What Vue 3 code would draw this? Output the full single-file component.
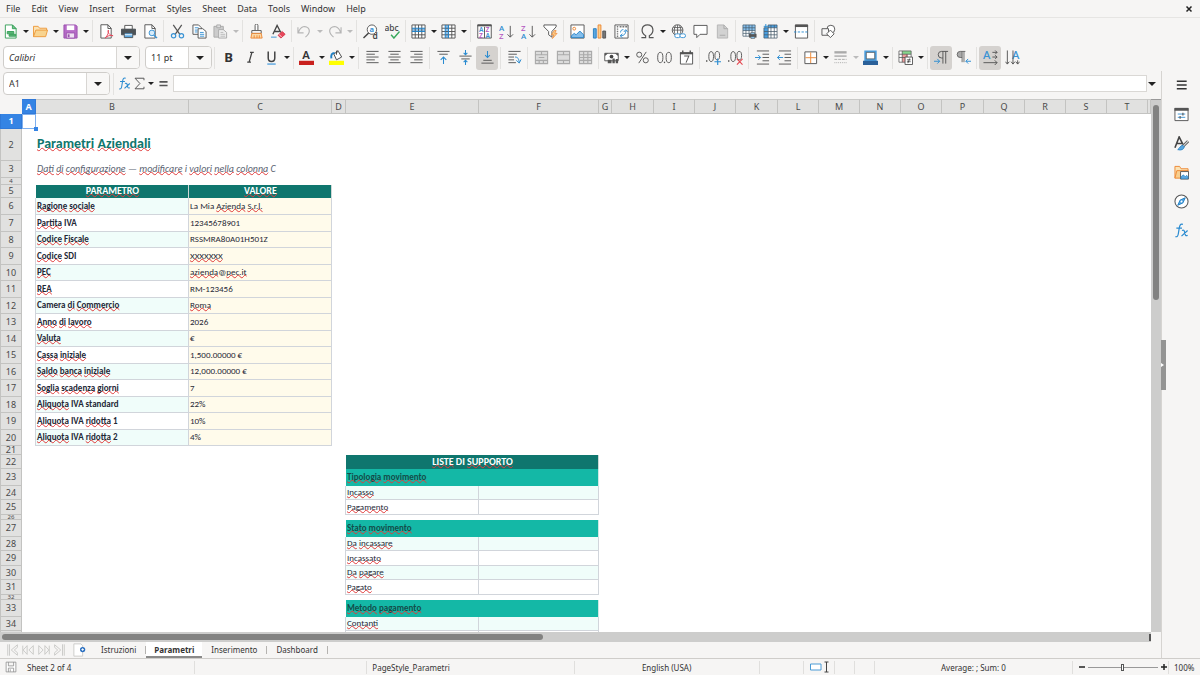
<script setup>
import { ref } from 'vue'

const menus = ['File', 'Edit', 'View', 'Insert', 'Format', 'Styles', 'Sheet', 'Data', 'Tools', 'Window', 'Help']

// Toolbar entries: '|' is a separator, a trailing '+' adds a drop-down arrow,
// '-' marks a disabled entry and '*' a pressed one.
const parse = (spec) =>
  spec.split(' ').map((s) => ({
    sep: s === '|',
    name: s.replace(/[+\-*]/g, ''),
    caret: s.includes('+'),
    off: s.includes('-'),
    on: s.includes('*'),
  }))

const standard = parse(
  'new+ open+ save+ | pdf print preview | cut copy paste+- | clone clear | undo+- redo+- | find spell | row+ col+ | sort az za filter | image chart pivot | omega+ link comment header- | area freeze+ split | shapes',
)
const formatting = parse(
  '| bold italic under+ | color+ fill+ | left center right | top middle bottom* | wrap | merge1- merge2- merge3- | money+ percent number date | adddec deldec | indent outdent | borders+ lines+- bcolor+ | cond+ | ltr* rtl | horiz* vert',
)
const side = ['menu', 'props', 'styles', 'gallery', 'navigator', 'fx']

const fontName = ref('Calibri')
const fontSize = ref('11 pt')
const cellRef = ref('A1')
const formula = ref('')
const zoom = ref(50)

const letters = 'ABCDEFGHIJKLMNOPQRST'.split('')
const widths = [14, 153, 143, 14, 133, 120, 13, 42, 41, 41, 42, 41, 41, 41, 41, 42, 41, 41, 41, 41]

const heights = [
  15, 32, 17, 7, 13, 17, 17, 16, 17, 16, 17, 16, 17, 16, 17, 16, 17, 16, 17, 16, 9, 14, 17, 14, 15, 5, 17, 14, 15, 14,
  15, 5, 17, 14, 14,
]

// Words between underscores are the ones the spelling checker flags.
const params = {
  6: ['_Ragione_ _sociale_', 'La Mia _Azienda_ _S.r.l._'],
  7: ['_Partita_ IVA', '12345678901'],
  8: ['_Codice_ _Fiscale_', 'RSSMRA80A01H501Z'],
  9: ['_Codice_ SDI', '_XXXXXXX_'],
  10: ['_PEC_', '_azienda_@_pec.it_'],
  11: ['_REA_', 'RM-123456'],
  12: ['Camera _di_ _Commercio_', '_Roma_'],
  13: ['_Anno_ _di_ _lavoro_', '2026'],
  14: ['_Valuta_', '€'],
  15: ['_Cassa_ _iniziale_', '1,500.00000 €'],
  16: ['_Saldo_ _banca_ _iniziale_', '12,000.00000 €'],
  17: ['_Soglia_ _scadenza_ _giorni_', '7'],
  18: ['_Aliquota_ IVA standard', '22%'],
  19: ['_Aliquota_ IVA _ridotta_ 1', '10%'],
  20: ['_Aliquota_ IVA _ridotta_ 2', '4%'],
}
const sections = { 23: '_Tipologia_ _movimento_', 27: '_Stato_ _movimento_', 33: '_Metodo_ _pagamento_' }
const items = {
  24: '_Incasso_',
  25: '_Pagamento_',
  28: '_Da_ _incassare_',
  29: '_Incassato_',
  30: '_Da_ _pagare_',
  31: '_Pagato_',
  34: '_Contanti_',
  35: '',
}

const cell = (cls = '', text = '', span = 1) => ({
  cls,
  span,
  parts: text.split('_').map((t, i) => ({ t, bad: i % 2 === 1 })),
})

const rows = heights.map((h, i) => {
  const n = i + 1
  const tint = n % 2 === 0 ? ' tint' : ''
  let left = [cell(), cell(), cell()]
  let right = [cell(), cell(), cell()]
  if (n === 1) left[0] = cell('cursor')
  if (n === 2) left[1] = cell('title', '_Parametri_ _Aziendali_')
  if (n === 3)
    left[1] = cell('subtitle', '_Dati_ _di_ _configurazione_ — _modificare_ i _valori_ _nella_ _colonna_ C')
  if (n === 5) left = [cell(), cell('head', '_PARAMETRO_'), cell('head', '_VALORE_')]
  if (params[n]) left = [cell('edge'), cell('label box' + tint, params[n][0]), cell('value box', params[n][1])]
  if (n === 22) right = [cell(), cell('head', '_LISTE_ DI _SUPPORTO_', 2)]
  if (sections[n]) right = [cell(), cell('section', sections[n], 2)]
  if (n in items) right = [cell('edge'), cell('item box' + tint, items[n]), cell('box' + tint)]
  return { n, h, small: h < 8, cells: [...left, ...right, cell('', '', 15)] }
})

const sheets = ['Istruzioni', 'Parametri', 'Inserimento', 'Dashboard']
const active = ref('Parametri')
</script>

<template>
  <svg class="defs" aria-hidden="true">
    <symbol id="i-new" viewBox="0 0 16 16"><path d="M2.500 1h7.500l4 4v10h-11.500z" fill="#fff" stroke="#37a05a" /><path d="M10 1v4h4z" fill="#7bc98f" stroke="#37a05a" /><path d="M4.500 8h7v2.500h-7zM6.500 11h7v2h-7z" fill="#58b574" stroke="#37a05a" /></symbol>
    <symbol id="i-open" viewBox="0 0 16 16"><path d="M.5 13.500V2.500h5l1.500 2h7.500v3" fill="#fbe3b5" stroke="#ed9a3c" /><path d="M.5 13.500l2.500-7h12.500l-2 7z" fill="#f8d490" stroke="#ed9a3c" /></symbol>
    <symbol id="i-save" viewBox="0 0 16 16"><path d="M1 1h12.500l1.500 1.500V15H1z" fill="#b76cc8" stroke="#9a4fae" /><path d="M4 1.500h8v5H4z" fill="#fff" /><path d="M3.500 9.500h9V15h-9z" fill="#efe0f3" stroke="#9a4fae" /><path d="M5 11h2v3H5z" fill="#9a4fae" /></symbol>
    <symbol id="i-pdf" viewBox="0 0 16 16"><path d="M2 .8h7.500L13 4.500V15H2z" fill="#fff" stroke="#555" /><path d="M9.500.8v4H13" fill="none" stroke="#555" /><path d="M6.500 15c3-3 4-6 3.500-8.500-1.500 2 1.500 6 5 6-3-.8-6 0-8.500 2.500z" fill="#fff" stroke="#e4465a" /></symbol>
    <symbol id="i-print" viewBox="0 0 16 16"><path d="M4 1.500h8V6H4z" fill="#fff" stroke="#555" /><path d="M.5 5.500h15v6H.5z" fill="#4c5256" stroke="#4c5256" /><path d="M3.500 9.500h9v5h-9z" fill="#5ba7e0" stroke="#4c5256" /><path d="M4 11.500h8" stroke="#fff" /></symbol>
    <symbol id="i-preview" viewBox="0 0 16 16"><path d="M2 .8h7.500L13 4.500V15H2z" fill="#fff" stroke="#555" /><path d="M9.500.8v4H13" fill="none" stroke="#555" /><circle cx="9.500" cy="9.500" r="3" fill="#d8ecfa" stroke="#3a93d4" /><path d="M11.500 12l3.500 3" stroke="#3a93d4" stroke-width="1.500" /></symbol>
    <symbol id="i-cut" viewBox="0 0 16 16"><path d="M3.500 1l7 10M12.500 1l-7 10" stroke="#555" stroke-width="1.300" /><circle cx="3.800" cy="12.500" r="2.300" fill="none" stroke="#3a93d4" stroke-width="1.300" /><circle cx="12.200" cy="12.500" r="2.300" fill="none" stroke="#3a93d4" stroke-width="1.300" /></symbol>
    <symbol id="i-copy" viewBox="0 0 16 16"><path d="M1 1h6l3 3v7H1z" fill="#fff" stroke="#555" /><path d="M3 4h4M3 6.500h3M3 8.500h3" stroke="#3a93d4" /><path d="M6.500 5h5L15 8v7H6.500z" fill="#fff" stroke="#555" /><path d="M8.500 9h4M8.500 11h4.500M8.500 13h4.500" stroke="#3a93d4" /></symbol>
    <symbol id="i-paste" viewBox="0 0 16 16"><path d="M1 2.500h10V14H1z" fill="#ccc" stroke="#aaa" /><path d="M4 1h4v3H4z" fill="#ddd" stroke="#aaa" /><path d="M6 6h5l3.500 3v6H6z" fill="#eee" stroke="#aaa" /><path d="M8 9h3M8 11h5M8 13h5" stroke="#bbb" /></symbol>
    <symbol id="i-clone" viewBox="0 0 16 16"><path d="M6.500 7V1.500a1.500 1.500 0 0 1 3 0V7" fill="#fff" stroke="#555" /><path d="M3 7h10v3H3z" fill="#fff" stroke="#555" /><path d="M3 10h10l1 5H2z" fill="#fbd9a8" stroke="#ed8733" /><path d="M5.500 12v3M8.500 12v3M11 12v3" stroke="#ed8733" /></symbol>
    <symbol id="i-clear" viewBox="0 0 16 16"><path d="M2 11L6.500 1.500 10.500 9M3.800 8h5.500" fill="none" stroke="#444" stroke-width="1.400" /><path d="M0 14h6" stroke="#3a93d4" /><path d="M7.500 12l4.500-4 3 3-4.500 4z" fill="#e8475b" stroke="#d33447" /><path d="M8.500 11l3 3" stroke="#fff" stroke-width=".8" /></symbol>
    <symbol id="i-undo" viewBox="0 0 16 16"><path d="M1 3.500v6h6M1.500 9C4 2 9 1.500 12 4.500c2.500 3 1 6-3 9.500" fill="none" stroke="#b5b5b5" stroke-width="1.200" /></symbol>
    <symbol id="i-redo" viewBox="0 0 16 16"><path d="M15 3.500v6H9M14.500 9C12 2 7 1.500 4 4.500c-2.500 3-1 6 3 9.500" fill="none" stroke="#b5b5b5" stroke-width="1.200" /></symbol>
    <symbol id="i-find" viewBox="0 0 16 16"><circle cx="9.500" cy="6" r="5" fill="#fff" stroke="#555" /><path d="M6 9.500L.5 15" stroke="#444" stroke-width="1.600" /><text x="7" y="8.500" font-size="8" font-weight="700" fill="#3a93d4">a</text><text x="10" y="15.500" font-size="9" font-weight="600" fill="#444">d</text></symbol>
    <symbol id="i-spell" viewBox="0 0 16 16"><text x="-.5" y="7.500" font-size="9" font-weight="500" fill="#444">abc</text><path d="M6.500 11.500l3 3.500 6-7" fill="none" stroke="#37a95c" stroke-width="1.500" /></symbol>
    <symbol id="i-row" viewBox="0 0 16 16"><path d="M1 1h14v14H1z" fill="#fff" /><path d="M1 4.500h14v3.500H1z" fill="#83beec" /><path d="M1 1h14v14H1zM4.500 1v14M8 1v14M11.500 1v14M1 11.500h14" fill="none" stroke="#555" /><path d="M1 4.500h14M1 8h14" stroke="#1e7fc4" /></symbol>
    <symbol id="i-col" viewBox="0 0 16 16"><path d="M1 1h14v14H1z" fill="#fff" /><path d="M4.500 1H8v14H4.500z" fill="#83beec" /><path d="M1 1h14v14H1zM11.500 1v14M1 4.500h14M1 8h14M1 11.500h14" fill="none" stroke="#555" /><path d="M4.500 1v14M8 1v14" stroke="#1e7fc4" /></symbol>
    <symbol id="i-sort" viewBox="0 0 16 16"><path d="M.8 1h14.400v14H.8zM8 3v12" fill="#fff" stroke="#555" /><path d="M.5 1.500h15" stroke="#555" stroke-width="2" /><text x="2" y="9" font-size="7" font-weight="600" fill="#3a93d4">A</text><text x="2" y="15" font-size="7" font-weight="600" fill="#b455c0">Z</text><text x="9" y="9" font-size="7" font-weight="600" fill="#b455c0">Z</text><text x="9" y="15" font-size="7" font-weight="600" fill="#3a93d4">A</text></symbol>
    <symbol id="i-az" viewBox="0 0 16 16"><text x="0" y="7" font-size="8.500" font-weight="500" fill="#2a8bd0">A</text><text x="0" y="15.500" font-size="8.500" font-weight="500" fill="#b455c0">Z</text><path d="M12 2v12M9 11l3 3 3-3" fill="none" stroke="#555" /></symbol>
    <symbol id="i-za" viewBox="0 0 16 16"><text x="0" y="7" font-size="8.500" font-weight="500" fill="#b455c0">Z</text><text x="0" y="15.500" font-size="8.500" font-weight="500" fill="#2a8bd0">A</text><path d="M12 2v12M9 11l3 3 3-3" fill="none" stroke="#555" /></symbol>
    <symbol id="i-filter" viewBox="0 0 16 16"><path d="M1 1h13v2L9.500 8v6L6 11.500V8L1 3z" fill="#fff" stroke="#555" /><path d="M12 7l-3 4.500h2.500L10 15.500l5-5.500h-2.500L14 7z" fill="#fbd08d" stroke="#ed8733" stroke-width=".8" /></symbol>
    <symbol id="i-image" viewBox="0 0 16 16"><path d="M1 1h14v14H1z" fill="#fff" stroke="#555" /><circle cx="4.500" cy="5" r="1.500" fill="#fff" stroke="#ed8733" /><path d="M1.500 14.500v-2l3-2.500 2 1.500 4-4 4 4v3z" fill="#83beec" stroke="#2a84c8" /></symbol>
    <symbol id="i-chart" viewBox="0 0 16 16"><path d="M1.500 5h3v10h-3z" fill="#5ba7e0" stroke="#2a7fc0" /><path d="M6.500 1h3v14h-3z" fill="#fbd08d" stroke="#ed8733" /><path d="M11.500 7.500h3V15h-3z" fill="#777" stroke="#555" /></symbol>
    <symbol id="i-pivot" viewBox="0 0 16 16"><path d="M1 1h14v14H1z" fill="#fff" stroke="#555" /><path d="M3 3h1.500M3 5.500h1.500M3 8h1.500M3 10.500h1.500M3 13h1.500M6 3h2M9 3h2M12 3h2" stroke="#777" stroke-width="1.500" /><path d="M7 12.500c4 0 5.500-2 5.500-5.500M10.500 8.500l2-2.500 2 2.500M9 10.500l-2.500 2L9 14.500M7 9c0-2 1-3 3-3" fill="none" stroke="#2a8bd0" /></symbol>
    <symbol id="i-omega" viewBox="0 0 16 16"><path d="M1.500 14.500H6v-2C0 9 1.500 1 8 1s8 8 2 11.500v2h4.500" fill="none" stroke="#555" stroke-width="1.300" /></symbol>
    <symbol id="i-link" viewBox="0 0 16 16"><circle cx="7" cy="6.500" r="5.700" fill="#fff" stroke="#555" /><path d="M1.500 6.500h11M7 1v11M2.500 3.800h9M4.500 11C3 8 3 5 5 1.500M9.500 11c1.500-3 1.500-6-.5-9.500" fill="none" stroke="#555" stroke-width=".9" /><rect x="4" y="10.500" width="6" height="4" rx="2" fill="#fff" stroke="#3a93d4" /><rect x="9.500" y="10.500" width="6" height="4" rx="2" fill="#fff" stroke="#3a93d4" /></symbol>
    <symbol id="i-comment" viewBox="0 0 16 16"><path d="M1 1.500h14v9.500H7.500L4 14.500V11H1z" fill="#fff" stroke="#555" /></symbol>
    <symbol id="i-header" viewBox="0 0 16 16"><path d="M2.500 1h7l4 4v10h-11z" fill="#d2d2d2" stroke="#b5b5b5" /><path d="M9.500 1v4h4M5 12h6" fill="none" stroke="#aaa" /></symbol>
    <symbol id="i-area" viewBox="0 0 16 16"><path d="M1 1h13v12H1z" fill="#fff" /><path d="M1 1h13v6H1z" fill="#83beec" /><path d="M1 1h13v12H1zM4.200 1v12M7.500 1v12M10.700 1v12M1 4h13M1 7h13M1 10h13" fill="none" stroke="#4a6072" stroke-width=".8" /><path d="M7.500 10.500h8v4h-8z" fill="#555" /><path d="M9.500 9h4v2h-4zM9.500 13.500h4v2h-4z" fill="#8ecbf5" stroke="#555" stroke-width=".6" /></symbol>
    <symbol id="i-freeze" viewBox="0 0 16 16"><path d="M1 4h14v11H1z" fill="#fff" /><path d="M1 4h4.500v11H1zM5.500 1h9.500v3H5.500z" fill="#4a9fe0" /><path d="M1 4h14v11H1zM5.500 1v14M5.500 1H15v3M8.500 1v14M12 1v14M1 8h14M1 11.500h14" fill="none" stroke="#45596a" stroke-width=".8" /><path d="M3 0v5M.8 2.500h4.500" stroke="#2a8bd0" /></symbol>
    <symbol id="i-split" viewBox="0 0 16 16"><path d="M1.500 1h13v14h-13z" fill="#fff" stroke="#555" /><path d="M1 2h14" stroke="#555" stroke-width="2.500" /><path d="M0 8.500h16" stroke="#2a8bd0" stroke-dasharray="2.500 1.500" /></symbol>
    <symbol id="i-shapes" viewBox="0 0 16 16"><circle cx="10.500" cy="5.500" r="4.200" fill="#fff" stroke="#555" /><path d="M1 5h7v7H1z" fill="#f7f7f7" stroke="#555" /><path d="M10 6.500l4 4-4 4-4-4z" fill="#fff" stroke="#555" /></symbol>

    <symbol id="i-bold" viewBox="0 0 16 16"><text x="3.500" y="13" font-size="14" font-weight="700" fill="#333">B</text></symbol>
    <symbol id="i-italic" viewBox="0 0 16 16"><path d="M7.500 2.500h4M4.500 13h4M9.500 2.500L6.500 13" stroke="#444" stroke-width="1.400" /></symbol>
    <symbol id="i-under" viewBox="0 0 16 16"><path d="M4.500 1.500v7c0 5 7 5 7 0v-7" fill="none" stroke="#444" stroke-width="1.600" /><path d="M3.500 15h9" stroke="#5aa5e0" stroke-width="1.500" /></symbol>
    <symbol id="i-color" viewBox="0 0 16 16"><text x="3.500" y="10" font-size="12" font-weight="600" fill="#333">A</text><path d="M0 11.500h16V16H0z" fill="#c9211e" /></symbol>
    <symbol id="i-fill" viewBox="0 0 16 16"><path d="M5 4l5-2.500 3.500 6L8 10.500z" fill="#fff" stroke="#444" /><path d="M8 5V1h2" fill="none" stroke="#444" /><path d="M6 3C3 3 2 5 2.500 9" fill="none" stroke="#1e7fc4" stroke-width="2" /><path d="M0 11.500h16V16H0z" fill="#ff0" /></symbol>
    <symbol id="i-left" viewBox="0 0 16 16"><path d="M1.500 1.500h13M1.500 4.500h9M1.500 7.500h13M1.500 10.500h9M1.500 13.500h13" stroke="#555" /></symbol>
    <symbol id="i-center" viewBox="0 0 16 16"><path d="M1.500 1.500h13M3.500 4.500h9M1.500 7.500h13M3.500 10.500h9M1.500 13.500h13" stroke="#555" /></symbol>
    <symbol id="i-right" viewBox="0 0 16 16"><path d="M1.500 1.500h13M5.500 4.500h9M1.500 7.500h13M5.500 10.500h9M1.500 13.500h13" stroke="#555" /></symbol>
    <symbol id="i-top" viewBox="0 0 16 16"><path d="M1.500 1.500h13M3.500 4.500h9" stroke="#555" /><path d="M8 15V7.500M5 10.500l3-3 3 3" fill="none" stroke="#2a8bd0" stroke-width="1.100" /></symbol>
    <symbol id="i-middle" viewBox="0 0 16 16"><path d="M1.500 6.500h13M3.500 9.500h9" stroke="#555" /><path d="M8 0v5M6 3l2 2 2-2M8 16v-5M6 13l2-2 2 2" fill="none" stroke="#2a8bd0" stroke-width="1.100" /></symbol>
    <symbol id="i-bottom" viewBox="0 0 16 16"><path d="M3.500 11h9M1.500 14h13" stroke="#555" /><path d="M8 1v7M5.500 5.500L8 8l2.500-2.500" fill="none" stroke="#2a8bd0" stroke-width="1.100" /></symbol>
    <symbol id="i-wrap" viewBox="0 0 16 16"><path d="M1.500 1.500h13M1.500 4.500h9M1.500 7.500h6M1.500 10.500h6M1.500 13.500h8" stroke="#555" /><path d="M8.500 7.500c3 0 4 1.500 4.500 5.500M10 11l3 3 2-4" fill="none" stroke="#2a8bd0" /></symbol>
    <symbol id="i-merge1" viewBox="0 0 16 16"><path d="M1.500 1.500h13v13h-13zM8 1.500v3.500M1.500 5h13M1.500 11h13M5.500 11v3.500M10 11v3.500M5 8h6" fill="#dcdcdc" stroke="#aaa" stroke-width="1.200" /></symbol>
    <symbol id="i-merge2" viewBox="0 0 16 16"><path d="M1.500 1.500h13v13h-13zM8 1.500v3.500M1.500 5h13M1.500 11h13M8 11v3.500" fill="#dcdcdc" stroke="#aaa" stroke-width="1.200" /></symbol>
    <symbol id="i-merge3" viewBox="0 0 16 16"><path d="M1.500 1.500h13v13h-13zM6 1.500v13M10.500 1.500v13M1.500 5h13M1.500 8h13M1.500 11h13" fill="#dcdcdc" stroke="#aaa" stroke-width="1.200" /></symbol>
    <symbol id="i-money" viewBox="0 0 16 16"><path d="M.8 3.500h14.400v8H.8z" fill="#fff" stroke="#555" /><path d="M1 3.500h3.500L1 6.500zM15 3.500h-3.500L15 6.500z" fill="#555" /><circle cx="8" cy="7" r="2" fill="#444" /><path d="M4 10.500h4V14H4zM9 9h2.500v5H9zM12.500 9.500H15V14h-2.500z" fill="#555" /></symbol>
    <symbol id="i-percent" viewBox="0 0 16 16"><circle cx="4.500" cy="5" r="2.700" fill="none" stroke="#555" /><circle cx="11.500" cy="11" r="2.700" fill="none" stroke="#555" /><path d="M12 2L4 14" stroke="#555" /></symbol>
    <symbol id="i-number" viewBox="0 0 16 16"><ellipse cx="3.500" cy="8" rx="2.800" ry="5.500" fill="none" stroke="#555" /><ellipse cx="12.500" cy="8" rx="2.800" ry="5.500" fill="none" stroke="#555" /><path d="M7.300 12.500h1.400v1.500H7.300z" fill="#555" /></symbol>
    <symbol id="i-date" viewBox="0 0 16 16"><path d="M1.500 3h13v12h-13z" fill="#fff" stroke="#555" /><path d="M1 3.500h14" stroke="#555" stroke-width="2.200" /><path d="M4 .5V4M12 .5V4" stroke="#555" stroke-width="1.500" /><path d="M5.500 6.500h5l-3 7" fill="none" stroke="#555" stroke-width="1.100" /></symbol>
    <symbol id="i-adddec" viewBox="0 0 16 16"><path d="M0 11h1.500v1.500H0z" fill="#555" /><ellipse cx="5.500" cy="7" rx="2.500" ry="5.300" fill="none" stroke="#555" /><ellipse cx="12" cy="6" rx="2.500" ry="4.500" fill="none" stroke="#555" /><path d="M12.500 9v7M9 12.500h7" stroke="#2a8bd0" stroke-width="1.200" /></symbol>
    <symbol id="i-deldec" viewBox="0 0 16 16"><path d="M0 11h1.500v1.500H0z" fill="#555" /><ellipse cx="5.500" cy="7" rx="2.500" ry="5.300" fill="none" stroke="#555" /><ellipse cx="12" cy="6" rx="2.500" ry="4.500" fill="none" stroke="#555" /><path d="M9.500 9.500l6 6M15.500 9.500l-6 6" stroke="#e4464f" stroke-width="1.200" /></symbol>
    <symbol id="i-indent" viewBox="0 0 16 16"><path d="M2 1h13M8 4.500h7M8 8h7M8 11.500h7M2 15h13" stroke="#555" /><path d="M0 8h6M3.500 5.500L6 8l-2.500 2.500" fill="none" stroke="#2a8bd0" /></symbol>
    <symbol id="i-outdent" viewBox="0 0 16 16"><path d="M2 1h13M8 4.500h7M8 8h7M8 11.500h7M2 15h13" stroke="#555" /><path d="M6.500 8H.5M3 5.500L.5 8 3 10.500" fill="none" stroke="#2a8bd0" /></symbol>
    <symbol id="i-borders" viewBox="0 0 16 16"><path d="M2 2h12.500v12.500H2z" fill="#fff" stroke="#555" /><path d="M8.200 2.500V14M2.500 8.200H14" stroke="#ed8733" /></symbol>
    <symbol id="i-lines" viewBox="0 0 16 16"><path d="M1.500 2.500h13" stroke="#aaa" stroke-width="2.500" /><path d="M1.500 6.500h13" stroke="#aaa" stroke-width="1.500" /><path d="M1.500 10h13" stroke="#aaa" stroke-dasharray="3 1" /><path d="M1.500 13.500h13" stroke="#aaa" stroke-dasharray="1 1" /></symbol>
    <symbol id="i-bcolor" viewBox="0 0 16 16"><path d="M2.500 1.500h11v9h-11z" fill="#fff" stroke="#4a9fe0" stroke-width="2.200" /><path d="M3.500 2.500h9v7h-9z" fill="none" stroke="#555" stroke-width=".8" /><path d="M0 11.500h16V16H0z" fill="#2a6099" /></symbol>
    <symbol id="i-cond" viewBox="0 0 16 16"><path d="M1 1h13v12H1z" fill="#fff" /><path d="M4.500 1H14v3.500H4.500z" fill="#86d68c" /><path d="M4.500 4.500h6V13h-6z" fill="#ef9a9a" /><path d="M1 1h13v12H1zM4.500 1v12M1 4.500h13M1 8h13M9.500 4.500V8" fill="none" stroke="#555" stroke-width=".8" /><path d="M7.500 7.500h8v8h-8z" fill="#fff" stroke="#555" /><path d="M9.500 10.500h4M9.500 12.500h4M12.500 9l-2 5" stroke="#333" stroke-width=".8" /></symbol>
    <symbol id="i-ltr" viewBox="0 0 16 16"><path d="M9.500 14.500v-13M12.500 14.500v-13M15 1.500H8a3.500 3.500 0 0 0 0 7h1.500" fill="none" stroke="#555" /><path d="M0 12h6M3.500 9.500L6 12l-2.500 2.500" fill="none" stroke="#2a8bd0" /></symbol>
    <symbol id="i-rtl" viewBox="0 0 16 16"><path d="M6.500 1.500h-2a3.200 3.200 0 0 0 0 6.500h2z" fill="#aaa" /><path d="M6.500 13V1.500M8.500 13V1.500M10 1.500H4.500a3.200 3.200 0 0 0 0 6.500h2" fill="none" stroke="#666" /><path d="M16 12h-5.500M13 9.500L10.500 12l2.500 2.500" fill="none" stroke="#2a8bd0" /></symbol>
    <symbol id="i-horiz" viewBox="0 0 16 16"><text x="0" y="10" font-size="12" font-weight="500" fill="#3a93d4">A</text><path d="M10 2.500h5M13 .5l2 2-2 2M10 7.500h5M13 5.500l2 2-2 2M.5 13.500H15M12.500 11l2.500 2.500-2.500 2.500" fill="none" stroke="#555" /></symbol>
    <symbol id="i-vert" viewBox="0 0 16 16"><text x="7.500" y="10" font-size="12" font-weight="500" fill="#3a93d4">A</text><path d="M2.500.5V15M.5 12.500l2 2.500 2-2.500M8.500.5V15M6.500 12.500l2 2.500 2-2.500M13.500 11v4M11.500 12.500l2 2.500 2-2.500" fill="none" stroke="#555" /></symbol>

    <symbol id="i-menu" viewBox="0 0 16 16"><path d="M3 3.500h10.500M3 7.500h10.500M3 11.500h10.500" stroke="#333" stroke-width="1.600" /></symbol>
    <symbol id="i-props" viewBox="0 0 16 16"><path d="M1 1.500h14v13H1z" fill="#fff" stroke="#555" /><path d="M.5 2.500h15" stroke="#555" stroke-width="3" /><path d="M4 7.500h8M4 11h8" stroke="#3a93d4" /><path d="M9.500 6v3M6.500 9.500v3" stroke="#555" stroke-width="1.200" /></symbol>
    <symbol id="i-styles" viewBox="0 0 16 16"><path d="M1 12.500L5.500 1 9.500 9M2.500 8h6" fill="none" stroke="#444" stroke-width="1.700" /><path d="M15 5.500l-6 6" stroke="#555" stroke-width="3" /><path d="M15 5.500l-5.500 5.500" stroke="#ddd" stroke-width="1.200" /><path d="M9.500 10c-3 0-3 3-5.500 4.500 3.500 1 6.500 0 7-3z" fill="#5ba7e0" stroke="#2a84c8" /></symbol>
    <symbol id="i-gallery" viewBox="0 0 16 16"><path d="M1 14V1.500h5l1.500 2.500H15v3" fill="#fbe3b5" stroke="#ed8733" /><path d="M1 14l2-8h12v3H7v5z" fill="#f8cf90" stroke="#ed8733" /><path d="M7 7h8.500v8H7z" fill="#fff" stroke="#555" /><path d="M7.500 14.500v-2l2.500-2 2 2 1.500-1.500 1.500 1.500v2z" fill="#5ba7e0" stroke="#1e7fc4" stroke-width=".7" /></symbol>
    <symbol id="i-navigator" viewBox="0 0 16 16"><circle cx="8" cy="8" r="7" fill="#fff" stroke="#555" stroke-width="1.100" /><path d="M12 4l-2.500 5.500L4 12l2.500-5.500z" fill="#5ba7e0" stroke="#1e7fc4" /><circle cx="8" cy="8" r="1" fill="#fff" /></symbol>
    <symbol id="i-fx" viewBox="0 0 16 16"><path d="M9.500 1.500C6.500.5 6 3 5.500 6L4.500 12c-.5 2.500-1.500 3-3 2.500M2.500 5.500h6M8.500 8c2-1 2.500 0 3 2.500s1 4 3 2.500M14.500 8l-6.500 6" fill="none" stroke="#2a8bd0" stroke-width="1.300" /></symbol>
    <symbol id="i-sum" viewBox="0 0 16 16"><path d="M13.500 4V1.500h-11l6 6.500-6 6.500h11V12" fill="none" stroke="#555" stroke-width="1.200" /></symbol>
    <symbol id="i-equal" viewBox="0 0 16 16"><path d="M3 6h10M3 10.500h10" stroke="#555" stroke-width="2" /></symbol>
    <symbol id="i-disk" viewBox="0 0 16 16"><path d="M1.500 1.500h13v13h-13zM4.500 1.500v5h7v-5M4.500 14.500v-5h7v5M7 11v3" fill="#fff" stroke="#888" /></symbol>
    <symbol id="i-first" viewBox="0 0 16 16"><path d="M2 1.500v13M4 1.500v13M13 2L6 8l7 6v-3L9.500 8 13 5z" fill="none" stroke="#c6c6c4" /></symbol>
    <symbol id="i-prev" viewBox="0 0 16 16"><path d="M2 3v10M7 3L2.500 8 7 13zM14 3L9 8l5 5z" fill="none" stroke="#c6c6c4" /></symbol>
    <symbol id="i-next" viewBox="0 0 16 16"><path d="M14 3v10M9 3l4.500 5L9 13zM2 3l5 5-5 5z" fill="none" stroke="#c6c6c4" /></symbol>
    <symbol id="i-last" viewBox="0 0 16 16"><path d="M14 1.500v13M12 1.500v13M3 2l7 6-7 6v-3L6.500 8 3 5z" fill="none" stroke="#c6c6c4" /></symbol>
    <symbol id="i-add" viewBox="0 0 16 16"><path d="M1 1h8l2 2v12H1z" fill="#fff" stroke="#c8c8c6" /><circle cx="11" cy="7.500" r="3" fill="#2a6fc0" /><path d="M11 6v3M9.500 7.500h3" stroke="#fff" /></symbol>
  </svg>

  <div class="app">
    <nav class="menubar">
      <button v-for="m in menus" :key="m">{{ m }}</button>
      <button class="close" aria-label="Close document">
        <svg viewBox="0 0 8 8"><path d="M1.500 1.500l5 5M6.500 1.500l-5 5" stroke="#222" stroke-width="1.500" /></svg>
      </button>
    </nav>

    <div class="toolbar">
      <template v-for="(t, i) in standard" :key="i">
        <i v-if="t.sep" class="sep"></i>
        <template v-else>
          <button class="tool" :class="{ shifted: t.caret }" :disabled="t.off" :aria-label="t.name">
            <svg><use :href="'#i-' + t.name" /></svg>
          </button>
          <button v-if="t.caret" class="caret" :disabled="t.off" :aria-label="t.name + ' options'"></button>
        </template>
      </template>
    </div>

    <div class="toolbar format">
      <div class="combo font">
        <input v-model="fontName" class="slanted" aria-label="Font name" />
        <button class="drop" aria-label="Font list"></button>
      </div>
      <div class="combo size">
        <input v-model="fontSize" aria-label="Font size" />
        <button class="drop" aria-label="Size list"></button>
      </div>
      <template v-for="(t, i) in formatting" :key="i">
        <i v-if="t.sep" class="sep"></i>
        <template v-else>
          <button class="tool" :class="{ on: t.on, shifted: t.caret }" :disabled="t.off" :aria-label="t.name">
            <svg><use :href="'#i-' + t.name" /></svg>
          </button>
          <button v-if="t.caret" class="caret" :disabled="t.off" :aria-label="t.name + ' options'"></button>
        </template>
      </template>
    </div>

    <div class="body">
      <main class="work">
        <div class="formula">
          <div class="combo name">
            <input v-model="cellRef" aria-label="Name box" />
            <button class="drop" aria-label="Named ranges"></button>
          </div>
          <i class="sep"></i>
          <button class="mini" aria-label="Function wizard"><svg><use href="#i-fx" /></svg></button>
          <button class="mini" aria-label="Sum"><svg><use href="#i-sum" /></svg></button>
          <button class="caret" aria-label="Select function"></button>
          <button class="mini equal" aria-label="Formula"><svg><use href="#i-equal" /></svg></button>
          <input v-model="formula" class="line" aria-label="Input line" />
          <button class="caret big" aria-label="Expand formula bar"></button>
        </div>

        <div class="sheet">
          <div class="view">
            <table>
              <colgroup>
                <col class="rowcol" />
                <col v-for="(w, i) in widths" :key="i" :style="{ width: w + 'px' }" />
                <col />
              </colgroup>
              <thead>
                <tr>
                  <th class="corner"></th>
                  <th v-for="l in letters" :key="l" :class="{ sel: l === 'A' }">{{ l }}</th>
                  <th></th>
                </tr>
              </thead>
              <tbody>
                <tr v-for="r in rows" :key="r.n" :style="{ height: r.h + 'px' }">
                  <th :class="{ sel: r.n === 1, small: r.small }">{{ r.n }}</th>
                  <td v-for="(c, i) in r.cells" :key="i" :colspan="c.span" :class="c.cls"><template v-for="(p, k) in c.parts" :key="k"><span v-if="p.bad" class="bad">{{ p.t }}</span><template v-else>{{ p.t }}</template></template></td>
                </tr>
              </tbody>
            </table>
          </div>
          <div class="vbar"><div class="vthumb"></div></div>
          <div class="hbar"><div class="hthumb"></div><div class="grip"></div></div>
        </div>

        <div class="tabs">
          <div class="pager">
            <button aria-label="First sheet"><svg><use href="#i-first" /></svg></button>
            <button aria-label="Previous sheet"><svg><use href="#i-prev" /></svg></button>
            <button aria-label="Next sheet"><svg><use href="#i-next" /></svg></button>
            <button aria-label="Last sheet"><svg><use href="#i-last" /></svg></button>
          </div>
          <button class="add" aria-label="Add sheet"><svg><use href="#i-add" /></svg></button>
          <button v-for="s in sheets" :key="s" class="tab" :class="{ current: s === active }" @click="active = s">{{ s }}</button>
        </div>
      </main>

      <aside class="side">
        <button v-for="s in side" :key="s" :aria-label="s"><svg><use :href="'#i-' + s" /></svg></button>
        <div class="handle"></div>
      </aside>
    </div>

    <footer class="status">
      <span class="disk"><svg><use href="#i-disk" /></svg></span>
      <span>Sheet 2 of 4</span>
      <span class="rule"></span>
      <span class="rule">PageStyle_Parametri</span>
      <span class="rule mid">English (USA)</span>
      <span class="rule"></span>
      <span class="rule mode">
        <svg viewBox="0 0 20 12"><path d="M1.500 3h10.500v6H1.500z" fill="#fff" stroke="#4a9bd6" /><path d="M15.500 1h4M15.500 11h4M17.500 1v10" stroke="#444" /></svg>
      </span>
      <span class="rule"></span>
      <span class="rule"></span>
      <span class="rule mid">Average: ; Sum: 0</span>
      <span class="rule zoom">
        <button aria-label="Zoom out"><svg viewBox="0 0 8 8"><path d="M1 4h6" stroke="#222" stroke-width="1.500" /></svg></button>
        <input v-model="zoom" type="range" min="0" max="100" aria-label="Zoom" />
        <button aria-label="Zoom in"><svg viewBox="0 0 8 8"><path d="M1 4h6M4 1v6" stroke="#222" stroke-width="1.500" /></svg></button>
      </span>
      <span class="rule">100%</span>
    </footer>
  </div>
</template>

<style>
body {
  background: #f6f5f4;
}
</style>

<style scoped>
.defs {
  display: none;
}
.app {
  display: flex;
  flex-direction: column;
  height: 100vh;
  overflow: hidden;
  background: #f6f5f4;
  color: #333;
  font-family: 'Noto Sans', 'Open Sans', sans-serif;
  font-size: 9px;
}
* {
  box-sizing: border-box;
}
button,
input {
  margin: 0;
  padding: 0;
  border: 0;
  background: none;
  color: inherit;
  font: inherit;
}
input {
  min-width: 0;
  outline: none;
}
.menubar {
  display: flex;
  align-items: center;
  gap: 11px;
  flex: none;
  height: 17px;
  padding: 0 7px 0 6px;
}
.close {
  display: flex;
  margin-left: auto;
}
.close svg {
  width: 8px;
  height: 8px;
}
.toolbar {
  display: flex;
  align-items: center;
  flex: none;
  height: 27px;
}
.format {
  padding-left: 3px;
}
.menubar + .toolbar {
  border-top: 1px solid #e6e5e3;
}
.tool,
.mini {
  display: flex;
  align-items: center;
  justify-content: center;
  flex: none;
  width: 22px;
  height: 24px;
  border-radius: 3px;
}
.shifted {
  padding-right: 1px;
}
.on {
  background: #d5d2cf;
}
.tool svg {
  width: 15px;
  height: 15px;
}
.caret {
  display: flex;
  align-items: center;
  justify-content: center;
  flex: none;
  width: 8px;
  height: 24px;
}
.caret::after,
.drop::after {
  content: '';
  border: 3px solid transparent;
  border-top-color: #222;
  border-bottom: 0;
}
.caret:disabled::after {
  border-top-color: #bbb;
}
.sep {
  flex: none;
  align-self: center;
  width: 1px;
  height: 22px;
  margin: 0 2px;
  background: #e3e2e0;
}
.combo {
  display: flex;
  flex: none;
  height: 23px;
  border: 1px solid #cfcdca;
  border-radius: 4px;
  background: #fff;
  overflow: hidden;
}
.combo input {
  flex: 1;
  padding-left: 5px;
}
.drop {
  display: flex;
  align-items: center;
  justify-content: center;
  width: 23px;
  border-left: 1px solid #d8d6d3;
  background: #f8f7f6;
}
.drop::after {
  border-width: 4px 4px 0;
}
.font {
  width: 137px;
  margin-right: 5px;
}
.size {
  width: 67px;
}
.slanted {
  font-style: italic;
}
.body {
  display: flex;
  flex: 1;
  min-height: 0;
}
.work {
  display: flex;
  flex-direction: column;
  flex: 1;
  min-width: 0;
}
.formula {
  display: flex;
  align-items: center;
  flex: none;
  height: 28px;
  padding: 0 5px 3px 3px;
}
.name {
  width: 107px;
}
.mini {
  width: 15px;
}
.mini svg {
  width: 13px;
  height: 13px;
}
.name + .sep {
  margin: 0 3px;
}
.equal {
  width: 17px;
}
.line {
  flex: 1;
  height: 17px;
  margin-left: 1px;
  padding: 0 4px;
  border: 1px solid #dad8d5;
  background: #fff;
}
.caret.big::after {
  border-width: 4px 4px 0;
}
.caret.big {
  margin-left: 1px;
}
.sheet {
  display: grid;
  grid-template-columns: minmax(0, 1fr) 10px;
  grid-template-rows: minmax(0, 1fr) 10px;
  flex: 1;
  min-height: 0;
}
.view {
  overflow: hidden;
  background: #fff;
}
table {
  width: 100%;
  table-layout: fixed;
  border-collapse: separate;
  border-spacing: 0;
}
.rowcol {
  width: 22px;
}
th,
td {
  padding: 0;
  line-height: 10px;
  white-space: nowrap;
}
th {
  border-right: 1px solid #c3c3c1;
  border-bottom: 1px solid #c3c3c1;
  background: #e1e1e0;
  color: #4a4a4a;
  font-weight: 400;
  line-height: 8px;
}
thead th {
  height: 15px;
  border-top: 1px solid #c9c9c7;
}
thead .corner {
  border-color: #f6f5f4;
  background: #f6f5f4;
}
tbody th {
  border-left: 1px solid #c3c3c1;
}
th.sel {
  border-color: #3079d8;
  background: #3584e4;
  color: #fff;
  font-weight: 700;
}
th.small {
  font-size: 6px;
  line-height: 4px;
}
td {
  padding: 0 0 1px 1px;
  color: #1f2937;
  font-family: Carlito, Lato, sans-serif;
  font-size: 9px;
}
.cursor {
  position: relative;
  box-shadow: inset 0 0 0 1px #7fb0ee;
}
.cursor::after {
  content: '';
  position: absolute;
  right: -2px;
  bottom: -2px;
  width: 4px;
  height: 4px;
  background: #3584e4;
}
.title {
  padding-bottom: 3px;
  color: #0f766e;
  font-size: 14px;
  font-weight: 700;
  line-height: 16px;
}
.subtitle {
  padding-bottom: 2px;
  color: #5b6472;
  font-size: 10px;
  font-style: italic;
}
.head {
  border-right: 1px solid #cfd8d6;
  background: #0f766e;
  color: #fff;
  font-size: 10px;
  font-weight: 700;
  text-align: center;
}
.edge {
  border-right: 1px solid #d1d5db;
}
.box {
  border-right: 1px solid #d1d5db;
  border-bottom: 1px solid #d1d5db;
}
.label {
  font-weight: 700;
}
.tint {
  background: #f0fdfa;
}
.value {
  background: #fffbeb;
}
.section {
  border-right: 1px solid #cfe8e4;
  background: #14b8a6;
  color: #134e4a;
  font-weight: 700;
}
.bad {
  text-decoration: underline wavy #e03a3a 1px;
  text-decoration-skip-ink: none;
  text-underline-offset: -1px;
}
.vbar {
  padding: 5px 2px 0;
  border-top: 1px solid #999;
  background: #cdcdcc;
}
.vthumb {
  width: 6px;
  height: 37%;
  border-radius: 3px;
  background: #828281;
}
.hbar {
  display: flex;
  align-items: center;
  background: #cdcdcc;
}
.hthumb {
  width: 47%;
  height: 6px;
  margin-left: 2px;
  border-radius: 3px;
  background: #828281;
}
.grip {
  width: 2px;
  height: 7px;
  margin-left: auto;
  background: #555;
}
.tabs {
  display: flex;
  flex: none;
  height: 17px;
  padding-left: 5px;
  border-bottom: 1px solid #cfcdca;
  font-size: 8px;
}
.pager {
  display: flex;
  width: 62px;
}
.pager button,
.add {
  display: flex;
  align-items: center;
  justify-content: center;
  flex: 1;
}
.pager svg,
.add svg {
  width: 14px;
  height: 14px;
}
.add {
  flex: none;
  width: 25px;
}
.tab {
  position: relative;
  height: 16px;
  padding: 0 10px 2px 9px;
}
.tab::after {
  content: '';
  position: absolute;
  right: 0;
  top: 4px;
  width: 1px;
  height: 8px;
  background: #b5b3b0;
}
.current {
  padding: 0 8px;
  border-bottom: 2px solid #8a8a89;
  background: #fff;
  font-weight: 700;
}
.current::after {
  display: none;
}
.side {
  position: relative;
  display: flex;
  flex-direction: column;
  flex: none;
  width: 39px;
  border-left: 1px solid #d6d4d1;
  border-bottom: 1px solid #cfcdca;
}
.side button {
  display: flex;
  align-items: center;
  justify-content: center;
  height: 29px;
}
.side svg {
  width: 15px;
  height: 15px;
}
.handle {
  position: absolute;
  top: calc(50% - 25px);
  left: -1px;
  display: flex;
  align-items: center;
  width: 5px;
  height: 50px;
  background: #949493;
}
.handle::after {
  content: '';
  border: 2px solid transparent;
  border-left: 3px solid #fff;
  border-right: 0;
}
.status {
  display: grid;
  grid-template-columns: 22px 172fr 172fr 207fr 185fr 44fr 31px 20px 20px 198fr 96px 32px;
  align-items: center;
  flex: none;
  height: 16px;
  font-size: 8px;
  white-space: nowrap;
}
.status > span {
  display: flex;
  align-items: center;
  height: 13px;
  padding-left: 5px;
}
.status > .rule {
  border-left: 1px solid #e0dfdd;
}
.status > .mid {
  justify-content: center;
  padding-left: 0;
}
.disk svg {
  width: 12px;
  height: 12px;
}
.mode svg {
  width: 20px;
  height: 12px;
}
.zoom {
  gap: 2px;
}
.zoom button {
  display: flex;
}
.zoom svg {
  width: 8px;
  height: 8px;
}
.zoom input {
  appearance: none;
  flex: 1;
  height: 10px;
}
.zoom input::-webkit-slider-runnable-track {
  height: 1px;
  background: #999;
}
.zoom input::-webkit-slider-thumb {
  appearance: none;
  width: 3px;
  height: 7px;
  margin-top: -3px;
  border: 1px solid #555;
  background: #fff;
}
</style>
